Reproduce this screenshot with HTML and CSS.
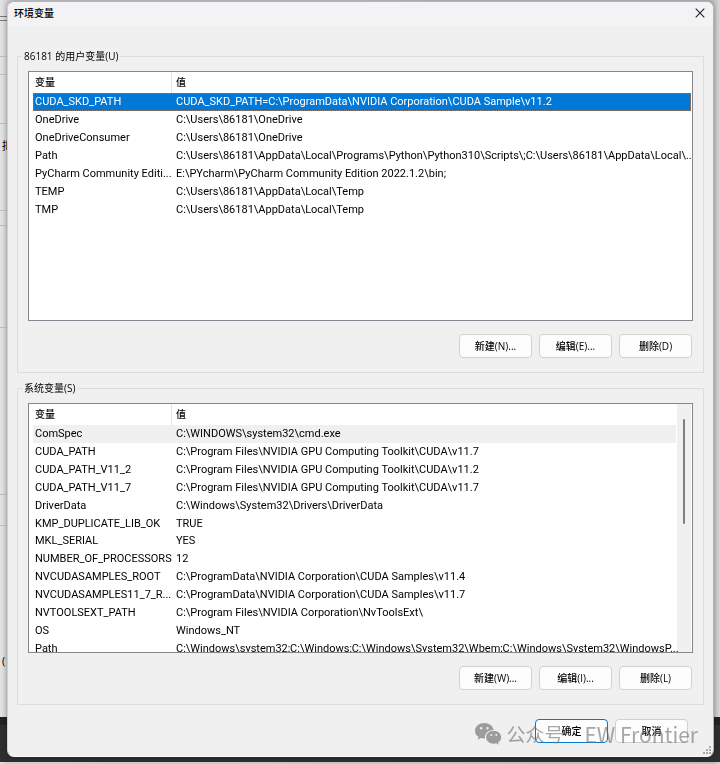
FILE: index.html
```html
<!DOCTYPE html>
<html lang="zh-CN">
<head>
  <meta charset="UTF-8">
  <meta name="viewport" content="width=device-width, initial-scale=1.0">
  <title>环境变量</title>
  <link rel="stylesheet" href="styles.css">
</head>
<body>
  <!-- window behind the dialog -->
  <div class="backdrop" aria-hidden="true">
    <div class="pane pane-top"></div>
    <div class="pane pane-1"></div>
    <div class="pane pane-2"></div>
    <div class="pane pane-3"></div>
    <div class="pane pane-4"></div>
    <span class="peek peek-1">拟</span>
    <span class="peek peek-2">(</span>
    <div class="taskbar"></div>
  </div>

  <div class="dialog" role="dialog" aria-labelledby="dialogTitle">
    <div class="titlebar">
      <h1 id="dialogTitle">环境变量</h1>
      <button class="close-btn" type="button" aria-label="Close">
        <svg width="10" height="10" viewBox="0 0 10 10"><path d="M.7.7l8.6 8.6M9.3.7L.7 9.3" stroke="#222" stroke-width="1.1" fill="none"/></svg>
      </button>
    </div>

    <form class="content">
      <fieldset class="group">
        <legend>86181 的用户变量(U)</legend>
        <div class="list">
          <table class="vars user-vars">
            <thead>
              <tr><th class="name">变量</th><th>值</th></tr>
            </thead>
            <tbody>
              <tr class="selected"><td>CUDA_SKD_PATH</td><td>CUDA_SKD_PATH=C:\ProgramData\NVIDIA Corporation\CUDA Sample\v11.2</td></tr>
              <tr><td>OneDrive</td><td>C:\Users\86181\OneDrive</td></tr>
              <tr><td>OneDriveConsumer</td><td>C:\Users\86181\OneDrive</td></tr>
              <tr><td>Path</td><td>C:\Users\86181\AppData\Local\Programs\Python\Python310\Scripts\;C:\Users\86181\AppData\Local\...</td></tr>
              <tr><td>PyCharm Community Editi...</td><td>E:\PYcharm\PyCharm Community Edition 2022.1.2\bin;</td></tr>
              <tr><td>TEMP</td><td>C:\Users\86181\AppData\Local\Temp</td></tr>
              <tr><td>TMP</td><td>C:\Users\86181\AppData\Local\Temp</td></tr>
            </tbody>
          </table>
        </div>
        <div class="buttons">
          <button class="btn" type="button">新建(N)...</button>
          <button class="btn" type="button">编辑(E)...</button>
          <button class="btn" type="button">删除(D)</button>
        </div>
      </fieldset>

      <fieldset class="group">
        <legend>系统变量(S)</legend>
        <div class="list">
          <table class="vars system-vars">
            <thead>
              <tr><th class="name">变量</th><th>值</th></tr>
            </thead>
            <tbody>
              <tr class="current"><td>ComSpec</td><td>C:\WINDOWS\system32\cmd.exe</td></tr>
              <tr><td>CUDA_PATH</td><td>C:\Program Files\NVIDIA GPU Computing Toolkit\CUDA\v11.7</td></tr>
              <tr><td>CUDA_PATH_V11_2</td><td>C:\Program Files\NVIDIA GPU Computing Toolkit\CUDA\v11.2</td></tr>
              <tr><td>CUDA_PATH_V11_7</td><td>C:\Program Files\NVIDIA GPU Computing Toolkit\CUDA\v11.7</td></tr>
              <tr><td>DriverData</td><td>C:\Windows\System32\Drivers\DriverData</td></tr>
              <tr><td>KMP_DUPLICATE_LIB_OK</td><td>TRUE</td></tr>
              <tr><td>MKL_SERIAL</td><td>YES</td></tr>
              <tr><td>NUMBER_OF_PROCESSORS</td><td>12</td></tr>
              <tr><td>NVCUDASAMPLES_ROOT</td><td>C:\ProgramData\NVIDIA Corporation\CUDA Samples\v11.4</td></tr>
              <tr><td>NVCUDASAMPLES11_7_R...</td><td>C:\ProgramData\NVIDIA Corporation\CUDA Samples\v11.7</td></tr>
              <tr><td>NVTOOLSEXT_PATH</td><td>C:\Program Files\NVIDIA Corporation\NvToolsExt\</td></tr>
              <tr><td>OS</td><td>Windows_NT</td></tr>
              <tr><td>Path</td><td>C:\Windows\system32;C:\Windows;C:\Windows\System32\Wbem;C:\Windows\System32\WindowsP...</td></tr>
            </tbody>
          </table>
          <div class="scrollbar"><div class="thumb"></div></div>
        </div>
        <div class="buttons">
          <button class="btn" type="button">新建(W)...</button>
          <button class="btn" type="button">编辑(I)...</button>
          <button class="btn" type="button">删除(L)</button>
        </div>
      </fieldset>

      <div class="buttons footer">
        <button class="btn default" type="submit">确定</button>
        <button class="btn" type="button">取消</button>
      </div>
    </form>

    <div class="watermark">
      <svg width="27" height="22" viewBox="0 0 27 22">
        <path fill="#9c9c9c" fill-rule="evenodd" d="M9.3 0C4.2 0 0 3.500 0 7.900c0 2.500 1.300 4.600 3.500 6.100l-.9 2.700 3.200-1.600c1.100.3 2.200.5 3.500.5h.7c-.9-4.700 3.200-8.900 8.600-8.700C18 3 14 0 9.300 0zM6.200 4a1.200 1.200 0 110 2.400 1.200 1.200 0 010-2.400zm6.300 0a1.200 1.200 0 110 2.400 1.200 1.200 0 010-2.400z"/>
        <path fill="#9c9c9c" fill-rule="evenodd" d="M18.700 7.700c-4.300 0-7.600 2.900-7.600 6.500s3.300 6.500 7.600 6.500c.9 0 1.800-.2 2.600-.4l2.500 1.400-.7-2.300c1.900-1.200 3.100-3 3.100-5.200 0-3.600-3.400-6.500-7.500-6.500zm-2.400 3.300a1 1 0 110 2 1 1 0 010-2zm5 0a1 1 0 110 2 1 1 0 010-2z"/>
      </svg>
      <span>公众号</span>
      <span class="brand">EW Frontier</span>
    </div>
    <svg class="grip" width="9" height="9" viewBox="0 0 9 9" aria-hidden="true">
      <path fill="#aaa" d="M6 0h2v2H6zM3 3h2v2H3zM6 3h2v2H6zM0 6h2v2H0zM3 6h2v2H3zM6 6h2v2H6z"/>
    </svg>
  </div>
</body>
</html>
```

FILE: styles.css
```css
* {
  box-sizing: border-box;
}
body {
  font-family: "Open Sans", "Noto Sans CJK SC", sans-serif;
  font-size: 11px;
  color: #000;
  background-color: #d4d4d4;
  margin: 0;
  padding: 1px 6px 7px 7px;
  height: 100vh;
  min-height: 640px;
  display: flex;
}

/* Background window */
.backdrop {
  position: fixed;
  inset: 0;
  z-index: -1;
  overflow: hidden;
  background: linear-gradient(90deg, #e4e4e4, #cfcfcf 7px, #bdbdbd calc(100% - 7px), #d6d6d6);
}
.pane {
  position: absolute;
  left: 0;
  width: 7px;
  border-top: 1px solid #bcbcbc;
  border-bottom: 1px solid #bcbcbc;
}
.pane-top {
  top: 16px;
  height: 5px;
  border-color: #777;
}
.pane-1 {
  top: 56px;
  height: 19px;
}
.pane-2 {
  top: 123px;
  height: 88px;
}
.pane-3 {
  top: 225px;
  height: 103px;
}
.pane-4 {
  top: 494px;
  height: 32px;
}
.peek {
  position: absolute;
  left: 2px;
}
.peek-1 {
  top: 137px;
}
.peek-2 {
  top: 653px;
}
.taskbar {
  position: absolute;
  left: 0;
  right: 0;
  bottom: 2px;
  height: 45px;
  background-color: #2d2e30;
  border-top: 8px solid #222;
}

/* Dialog */
.dialog {
  position: relative;
  flex: 1;
  min-width: 0;
  display: flex;
  flex-direction: column;
  background-color: #f0f0f0;
  border: 1px solid #b4b4b4;
  border-left-color: #d0d0d0;
  border-bottom-color: #fafafa;
  border-radius: 7px;
  box-shadow: 0 0 4px rgba(0, 0, 0, 0.3);
}
.titlebar {
  display: flex;
  align-items: center;
  justify-content: space-between;
  height: 24px;
  padding: 0 6px 3px;
  background-color: #f3f2f5;
  border-radius: 6px 6px 0 0;
}
.titlebar h1 {
  margin: 0;
  font-size: 10px;
  font-weight: 500;
}
.close-btn {
  display: flex;
  padding: 2px;
  border: none;
  background: none;
}
.content {
  flex: 1;
  min-height: 0;
  display: flex;
  flex-direction: column;
  gap: 7px;
  padding: 22px 9px 13px;
}

/* Groups */
.group {
  flex: 1;
  min-width: 0;
  min-height: 0;
  display: flex;
  flex-direction: column;
  gap: 13px;
  margin: 0;
  padding: 7px 10px 14px;
  border: 1px solid #dcdcdc;
}
.group legend {
  margin-left: -6px;
  padding: 0 2px;
  font-size: 10px;
  line-height: 16px;
}
.list {
  flex: 1;
  min-height: 0;
  display: flex;
  align-items: flex-start;
  padding: 0 1px 0 4px;
  overflow: hidden;
  background-color: #fff;
  border: 1px solid #828790;
}
.vars {
  flex: 1;
  width: 100%;
  min-width: 0;
  z-index: 1;
  table-layout: fixed;
  border-collapse: separate;
  border-spacing: 0;
  font-family: Roboto, "Noto Sans CJK SC", sans-serif;
}
.user-vars {
  height: 146px;
}
.system-vars {
  height: 253px;
}
.vars th {
  height: 21px;
  padding: 0 4px;
  font-size: 10px;
  font-weight: 500;
  line-height: 18px;
  text-align: left;
}
.vars th.name {
  width: 139px;
  padding-left: 2px;
  border-right: 1px solid #e5e5e5;
}
.vars td {
  padding: 1px 0 0 4px;
  line-height: 16px;
  white-space: nowrap;
}
.vars td:first-child {
  padding-left: 2px;
}
.selected {
  color: #fff;
  background-color: #0078d7;
  outline: 1px dotted #8a7a70;
  outline-offset: -1px;
}
.current {
  background-color: #f0f0f0;
}
.scrollbar {
  flex: none;
  align-self: stretch;
  width: 14px;
  margin-left: 1px;
  padding: 15px 6px 0;
  background-color: #f0f0f0;
}
.thumb {
  width: 2px;
  height: 105px;
  border-radius: 1px;
  background-color: #808080;
}

/* Buttons */
.buttons {
  display: flex;
  justify-content: flex-end;
  gap: 7px;
  padding-right: 1px;
}
.btn {
  width: 73px;
  height: 24px;
  padding: 0 0 2px;
  font-family: inherit;
  font-size: 10px;
  font-weight: 500;
  color: #000;
  background-color: #fdfdfd;
  border: 1px solid #d0d0d0;
  border-radius: 4px;
}
.btn.default {
  border-color: #0078d4;
}
.footer {
  padding: 7px 16px 0 0;
}

/* Overlays */
.watermark {
  position: absolute;
  right: 15px;
  bottom: 9px;
  display: flex;
  align-items: center;
  gap: 4px;
  font-family: "Noto Sans CJK SC", sans-serif;
  font-size: 19px;
  line-height: 26px;
  color: rgba(110, 110, 110, 0.6);
  pointer-events: none;
}
.watermark .brand {
  margin-left: 17px;
  font-size: 21px;
}
.grip {
  position: absolute;
  right: 1px;
  bottom: 1px;
}
```
